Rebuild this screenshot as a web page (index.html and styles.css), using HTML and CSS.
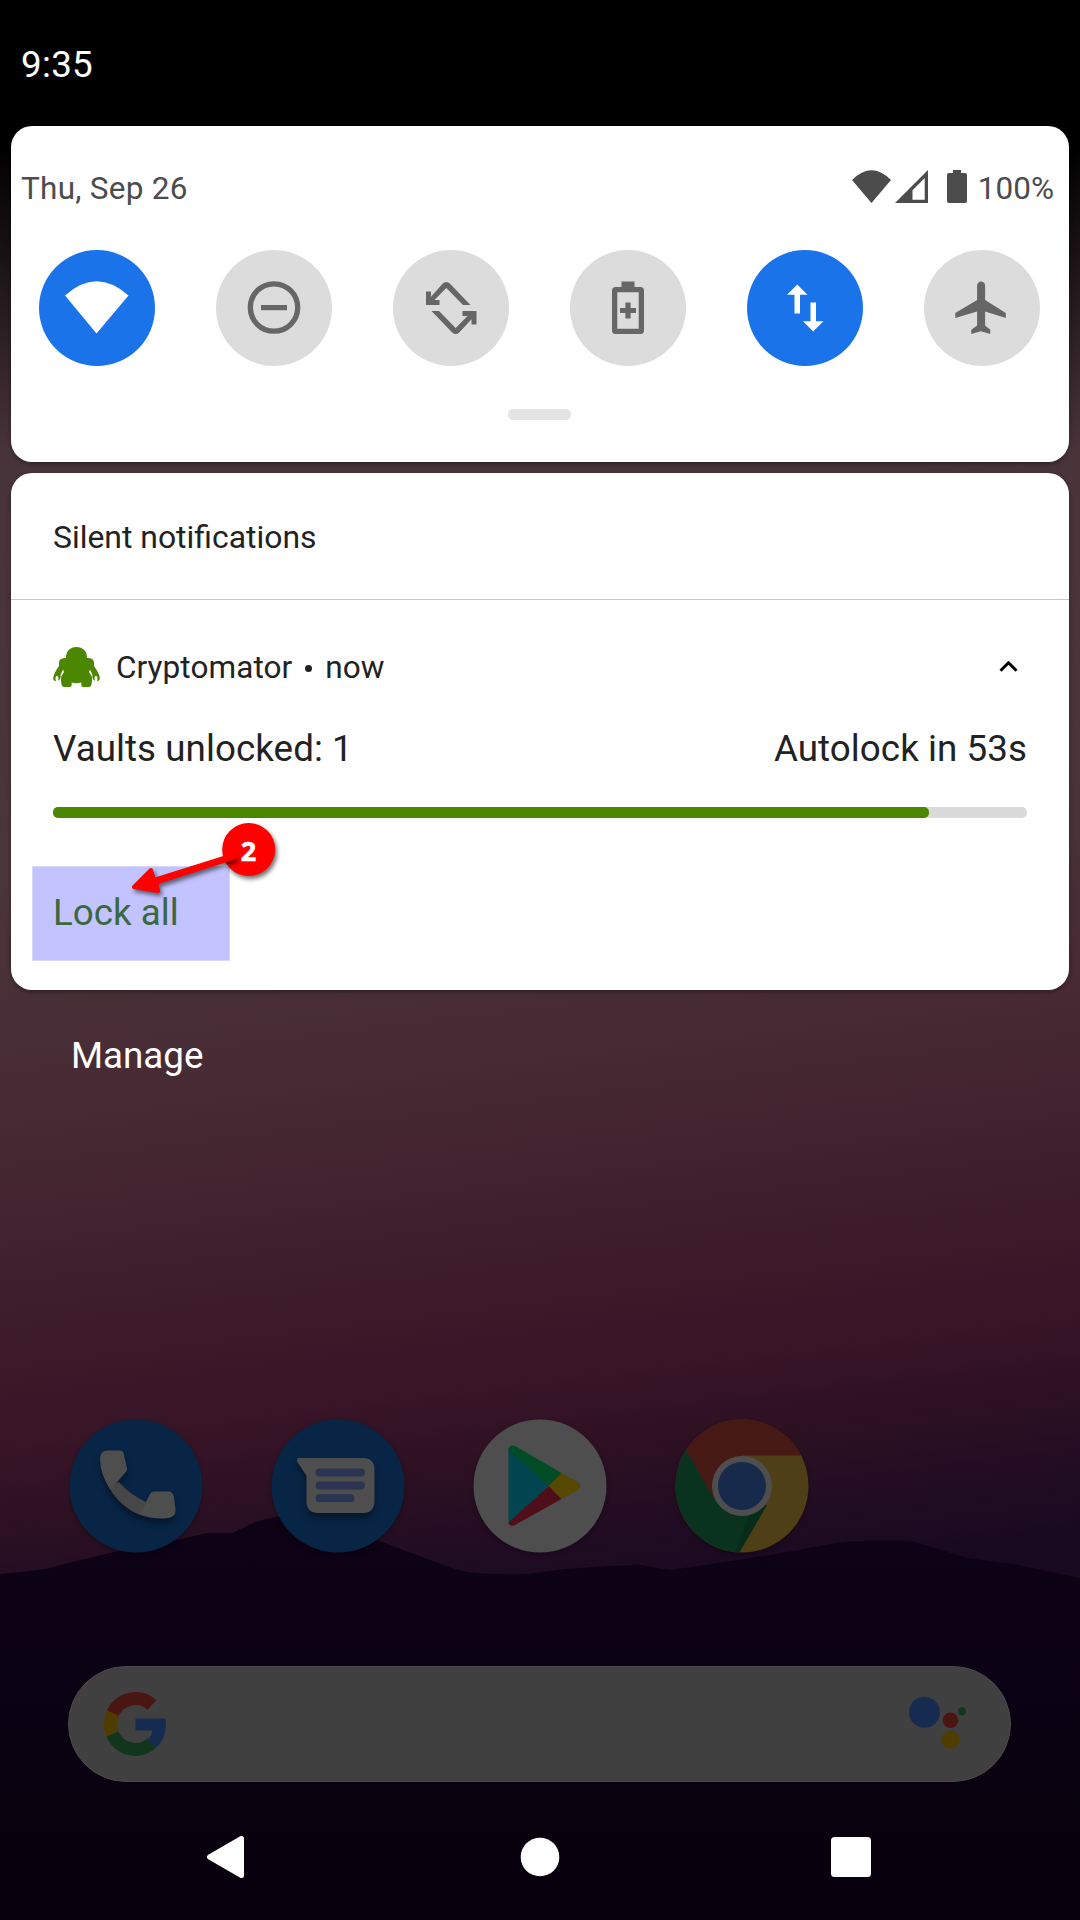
FILE: index.html
```html
<!DOCTYPE html>
<html lang="en">
<head>
<meta charset="utf-8">
<title>Notifications</title>
<link rel="stylesheet" href="styles.css">
</head>
<body>
<div class="screen">
  <svg class="hills" viewBox="0 0 1080 420" aria-hidden="true">
    <defs><linearGradient id="hill" x1="0" y1="0" x2="0" y2="1"><stop offset="0" stop-color="#0e0316"/><stop offset=".45" stop-color="#0b0213"/><stop offset=".8" stop-color="#08010d"/><stop offset="1" stop-color="#08000c"/></linearGradient></defs>
    <path fill="url(#hill)" d="M0 74L20 72 45 69 80 60 114 52 172 41 207 33H232L255 22 275 17 310 8 345 22 377 40 406 51 441 64Q458 71 475 73 500 75 527 74L565 69 606 66 641 65Q655 68 671 70L751 58 799 50 835 43Q850 41 870 41H905Q915 41 925 45L968 58 1019 65 1080 78V420H0Z"/>
  </svg>

  <header class="statusbar">9:35</header>

  <section class="card quick">
    <div class="quick-head">
      <span class="date">Thu, Sep 26</span>
      <div class="system">
        <svg class="sys-wifi" viewBox="0 0 39 33"><path d="M0 10Q19.5-9.500 39 10L19.500 33Z"/></svg>
        <svg class="sys-signal" viewBox="0 0 33 33"><path fill-rule="evenodd" d="M33 0V33H0ZM29.700 8L17.500 20.200V29.700H29.700Z"/></svg>
        <svg class="sys-battery" viewBox="0 0 20 33"><path d="M6 0H14V3H18Q20 3 20 5V31Q20 33 18 33H2Q0 33 0 31V5Q0 3 2 3H6Z"/></svg>
        <span class="percent">100%</span>
      </div>
    </div>
    <div class="tiles">
      <div class="tile on"><svg viewBox="0 0 116 116"><path d="M26 45.500Q57.500 17 89.500 45.500L57.500 83.500Z"/></svg></div>
      <div class="tile"><svg viewBox="0 0 116 116"><circle cx="58" cy="57.500" r="23.700" fill="none" stroke="#666" stroke-width="5.300"/><path d="M45 55H71V60.200H45Z"/></svg></div>
      <div class="tile"><svg viewBox="0 0 116 116"><g fill="#666"><path d="M53.300 31.900Q55.200 31.900 56.800 33.500L77.500 55H70L53.300 37.900 41.500 50H46.500V55H33V41.500H38V46.800L49.800 33.500Q51.400 31.900 53.300 31.900Z"/><path d="M62.700 84.100Q60.800 84.100 59.200 82.500L38.500 61H46L62.700 78.100 74.500 66H69.500V61H83.500V74.500H78.500V69.200L66.200 82.500Q64.600 84.100 62.700 84.100Z"/></g></svg></div>
      <div class="tile"><svg viewBox="0 0 116 116"><path fill-rule="evenodd" d="M51.500 31.500H64.500V37H70.500Q74 37 74 40.500V80.500Q74 84 70.500 84H45.500Q42 84 42 80.500V40.500Q42 37 45.500 37H51.500ZM47.300 42.200V78.800H68.700V42.200ZM55.400 52.500H60.600V58H66V63.100H60.600V68.500H55.400V63.100H50V58H55.400Z"/></svg></div>
      <div class="tile on"><svg viewBox="0 0 116 116"><path d="M50.300 34.500L60.500 44.800H53V63.500H47.500V44.800H40ZM66.200 81.500L76.500 71.200H69V52.500H63.500V71.200H56Z"/></svg></div>
      <div class="tile"><svg viewBox="0.700 0 116 116"><path d="M82.500 68V63L61.800 50V35.500C61.800 33.200 60 31.500 57.800 31.500S53.800 33.200 53.800 35.500V50L32 63V68L53.800 61.500V75.500L48 79.800V84L57.500 81.300 67 84V79.800L61.800 75.500V61.500Z"/></svg></div>
    </div>
    <div class="handle"></div>
  </section>

  <section class="card silent">
    <h2 class="silent-title">Silent notifications</h2>
    <article class="notice">
      <div class="app-row">
        <svg class="app-icon" viewBox="0 0 47 40"><path fill="#4c8700" d="M13 11C13 4 17 0 23.500 0S34 4 34 11C38 11 41 12 41 16V19C44 23 46 27 46.800 30.500 47 33 46 34.200 44 34 45 31.500 44.500 29.500 43 28.800 41.500 29.500 41 31 42 33.500 39.500 33 39 30 39.500 28L37 22.500 36 25 38.800 29.500Q39.500 33 38.500 37.500 38 40 35.500 40H30Q28 40 28.300 35.500 23.500 36.800 18.700 35.500 19 40 17 40H11.500Q9 40 8.500 37.500 7.500 33 8.200 29.500L11 25 10 22.500 7.500 28C8 30 7.500 33 5 33.500 6 31 5.500 29.500 4 28.800 2.500 29.500 2 31.500 3 34 1 34.200 0 33 .2 30.500 1 27 3 23 6 19V16C6 12 9 11 13 11Z"/></svg>
        <span class="app-name">Cryptomator</span><span class="dot"></span><span class="when">now</span>
        <svg class="chevron" viewBox="0 0 19 11"><path d="M1.500 9.700L9.500 1.800 17.500 9.700" fill="none" stroke="#000" stroke-width="3"/></svg>
      </div>
      <div class="message"><span class="vaults">Vaults unlocked: 1</span><span class="autolock">Autolock in 53s</span></div>
      <div class="progress"><div class="progress-fill" style="width:89.900%"></div></div>
      <div class="action">Lock all
        <svg class="callout" viewBox="0 0 160 84">
          <g class="shadowed"><circle cx="126.700" cy="33.400" r="26.500" fill="red"/></g>
          <g class="shadowed"><path fill="red" stroke="red" stroke-width="4" stroke-linejoin="round" d="M12 71L29 54 32 64 110 39.500 112 41.500 34 66.500 36 75Z"/></g>
          <text x="126.500" y="44.500">2</text>
        </svg>
      </div>
    </article>
  </section>

  <div class="manage">Manage</div>

  <div class="dock">
    <svg viewBox="0 0 134 134"><circle cx="67" cy="67" r="66.500" fill="#082546"/><g class="lift" fill="#4e4e4e"><path fill="#474747" d="M40 68L50 63Q60 75 77 83L71 96Q50 87 40 68Z"/><path d="M38 31.500H51Q54 31.500 54.500 34L58 49.500Q58.500 52 56 54L41.500 71Q31 55 31 40 31 31.500 38 31.500ZM85 72.500H99Q104 72.500 105 78L106.500 91Q107 99 96 99.500 82 100 70.500 95.500L80.500 76Q82 72.500 85 72.500Z"/></g></svg>
    <svg viewBox="0 0 134 134"><circle cx="67" cy="67" r="66.500" fill="#082546"/><path class="lift" fill="#4e4e4e" d="M28 39H92Q103.500 39 103.500 51V82Q103.500 94 92 94H47Q35.500 94 35.500 82V57L26.500 43Q25 39 28 39Z"/><path d="M48.500 53.500H90M48.500 66.500H90M48.500 79.200H79.500" stroke="#283450" stroke-width="7.800" stroke-linecap="round"/></svg>
    <svg viewBox="0 0 134 134"><circle cx="67" cy="67" r="66.500" fill="#4e4e4e"/><path fill="#00454f" d="M35.500 29L76 67 35.500 105Z"/><path fill="#004c26" d="M35.500 31C35.500 27 39 25.500 42 27L88.500 54 76 67Z"/><path fill="#500e1a" d="M35.500 103.500C36 107 39 107.500 42 106L88.500 80 76 67Z"/><path fill="#574800" d="M88.500 54L105 63Q109.500 67 105 71L88.500 80 76 67Z"/></svg>
    <svg viewBox="0 0 134 134"><defs><clipPath id="disc"><circle cx="67" cy="67" r="66.500"/></clipPath></defs><g clip-path="url(#disc)"><path fill="#4f3f16" d="M0 0H134V134H0Z"/><path fill="#471914" d="M0 0H134V36.500H67L40 82 11 31Z"/><path fill="#09321f" d="M0 13L11 31 40.500 82 92 86 64 134H0Z"/><path fill="#062616" d="M74 97L92 86 64 134H60Z" opacity=".5"/></g><circle cx="67" cy="67" r="30" fill="#4e4e4e"/><circle cx="67" cy="67" r="24" fill="#172a4c"/></svg>
  </div>

  <div class="search">
    <svg class="google" viewBox="0 0 62 64"><g fill="none" stroke-width="13"><path stroke="#4a1612" d="M8.500 22A25 25.300 0 0 1 48 13"/><path stroke="#4f3c00" d="M9 21A25 25.300 0 0 0 9 43"/><path stroke="#12361c" d="M8.500 42A25 25.300 0 0 0 48 51"/></g><path fill="#162b50" d="M31.500 26.500H61.500C63 38 60 49 52 55.500L43 48.500Q47 45 48.500 38.500H31.500Z"/></svg>
    <svg class="assistant" viewBox="0 0 58 54"><circle cx="15.500" cy="16.300" r="15.500" fill="#162b50"/><circle cx="41.500" cy="24.300" r="7.800" fill="#4a1612"/><circle cx="41.500" cy="43.800" r="9" fill="#4f3c00"/><circle cx="53" cy="15.300" r="4" fill="#12361c"/></svg>
  </div>

  <nav class="navbar">
    <svg viewBox="0 0 42 42"><path fill="#fff" stroke="#fff" stroke-width="5" stroke-linejoin="round" d="M4.500 21L36.500 2.500V39.500Z"/></svg>
    <svg viewBox="0 0 42 42"><circle cx="22" cy="21" r="19.300" fill="#fff"/></svg>
    <svg viewBox="0 0 42 42"><rect x="1" y="1" width="40" height="40" rx="3.500" fill="#fff"/></svg>
  </nav>
</div>
</body>
</html>
```
FILE: styles.css
```css
* { box-sizing: border-box; }
body { margin: 0; font-family: Roboto, sans-serif; background: #000; }
svg { display: block; flex: none; }
.screen {
  position: relative;
  width: 1080px; height: 1920px;
  display: flex; flex-direction: column;
  overflow: hidden;
  background:
    linear-gradient(180deg, #000 0, #000 145px, rgba(0,0,0,0) 450px),
    linear-gradient(173deg, #45313a 0, #4a353a 880px, #472a34 1110px, #3e1d2a 1300px, #381527 1430px, #2c1022 1520px, #200c23 1600px, #180920 1660px);
}
.hills { position: absolute; left: 0; top: 1500px; width: 1080px; height: 420px; }
.statusbar { height: 126px; flex: none; background: #000; color: #fff; font-size: 36.750px; letter-spacing: .3px; line-height: 126px; padding: 2px 0 0 21px; }
.card { flex: none; margin: 0 11px; background: #fff; border-radius: 21px; }
.quick { height: 336px; display: flex; flex-direction: column; box-shadow: 0 2px 4px rgba(0,0,0,.35); }
.quick-head { height: 124px; padding: 0 15px 0 10px; display: flex; align-items: center; justify-content: space-between; color: #4c4c4c; font-size: 31.500px; }
.date { letter-spacing: .27px; }
.system { display: flex; align-items: center; fill: #4c4c4c; }
.system svg { margin-bottom: 4px; }
.sys-wifi { width: 39px; height: 33px; margin-right: 4px; }
.sys-signal { width: 33px; height: 33px; margin-right: 19px; }
.sys-battery { width: 20px; height: 33px; margin-right: 11px; }
.tiles { display: flex; gap: 61px; padding-left: 28px; }
.tile { width: 116px; height: 116px; border-radius: 50%; background: #dcdcdc; fill: #666; }
.tile.on { background: #1b73e9; fill: #fff; }
.handle { width: 63px; height: 11px; border-radius: 5px; background: #e4e4e4; margin: 43px 0 0 497px; }
.silent { height: 517px; margin-top: 11px; position: relative; color: #222; box-shadow: 0 2px 4px rgba(0,0,0,.35); }
.silent-title { margin: 0; height: 127px; padding: 1px 0 0 42px; border-bottom: 1px solid #c8c8c8; line-height: 126px; font-size: 31.900px; font-weight: 400; }
.notice { padding: 0 42px; display: flex; flex-direction: column; }
.app-row { height: 86px; padding-top: 48px; display: flex; align-items: center; font-size: 31.500px; line-height: 38px; }
.app-row span { position: relative; top: 1px; }
.app-icon { width: 47px; height: 40px; margin-bottom: 1px; }
.app-name { margin-left: 16px; letter-spacing: .08px; }
.dot { width: 7px; height: 7px; border-radius: 50%; background: #222; margin: 0 13px 0 13px; }
.chevron { width: 19px; height: 11px; margin: 0 9px 2px auto; }
.message { height: 121px; display: flex; justify-content: space-between; align-items: center; font-size: 36.750px; letter-spacing: .06px; padding-top: 4px; }
.progress { height: 11px; border-radius: 5px; background: #dadada; }
.progress-fill { height: 100%; border-radius: 5px; background: #4c8700; }
.action { position: relative; width: 198px; height: 95px; margin: 48px 0 0 -21px; padding-left: 20px; background: #c3c3ff; border: 1px solid #d8d8fb; line-height: 92px; font-size: 36.750px; color: #3b683f; }
.callout { position: absolute; left: 89px; top: -51px; width: 160px; height: 84px; overflow: visible; }
.shadowed { filter: drop-shadow(2px 3px 2px rgba(0,0,0,.55)); }
.callout text { font: 700 27px "Noto Sans", sans-serif; fill: #fff; stroke: #fff; stroke-width: .6px; text-anchor: middle; }
.manage { position: relative; margin: 44px 0 0 71px; height: 44px; line-height: 44px; color: #fff; font-size: 36.750px; }
.dock { position: relative; margin: 341px 0 0 68.500px; height: 134px; display: flex; gap: 68px; }
.dock svg { width: 134px; height: 134px; filter: drop-shadow(0 2px 2px rgba(0,0,0,.3)); }
.lift { filter: drop-shadow(0 5px 3px rgba(0,0,0,.4)); }
.search { position: relative; margin: 113px 69px 0 68px; height: 116px; border-radius: 58px; background: #404041; border: 1px solid #4a484a; display: flex; align-items: center; justify-content: space-between; padding: 0 43px 0 35px; }
.google { width: 62px; height: 64px; margin-bottom: 1px; }
.assistant { width: 58px; height: 54px; margin-bottom: 3px; }
.navbar { position: relative; margin-top: 54px; padding: 0 208px 0 205px; display: flex; justify-content: space-between; }
.navbar svg { width: 42px; height: 42px; }
```
